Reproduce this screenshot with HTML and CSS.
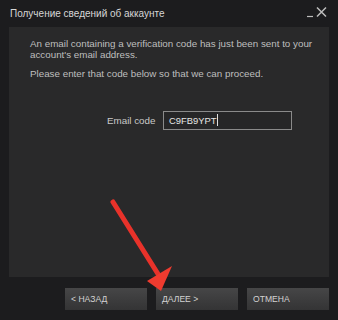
FILE: index.html
```html
<!DOCTYPE html>
<html lang="en">
<head>
    <meta charset="UTF-8">
    <title>Получение сведений об аккаунте</title>
    <link rel="stylesheet" href="styles.css">
</head>
<body>
    <div class="window">
        <div class="titlebar">
            <span class="title">Получение сведений об аккаунте</span>
            <span class="controls">
                <svg width="22" height="12" viewBox="0 0 22 12">
                    <path d="M0 10.5h6" stroke="#bdbdbd" stroke-width="1.2"/>
                    <path d="M10 1.5l9 9M19 1.5l-9 9" stroke="#bdbdbd" stroke-width="1.5"/>
                </svg>
            </span>
        </div>

        <div class="panel">
            <p>An email containing a verification code has just been sent to your account's email address.</p>
            <p>Please enter that code below so that we can proceed.</p>

            <div class="code-row">
                <label for="emailCode">Email code</label>
                <div class="code-input" id="emailCode">C9FB9YPT<span class="caret"></span></div>
            </div>
        </div>

        <div class="buttons">
            <button>&lt; НАЗАД</button>
            <button>ДАЛЕЕ &gt;</button>
            <button>ОТМЕНА</button>
        </div>

        <svg class="arrow" width="338" height="320" viewBox="0 0 338 320">
            <path d="M113 202 L158 274" stroke="#e8322a" stroke-width="5" stroke-linecap="round"/>
            <path d="M147 281 L172 266 L161 291 Z" fill="#ef3b2f"/>
        </svg>
    </div>
</body>
</html>
```

FILE: styles.css
```css
body {
    margin: 0;
    background-color: #1b1b1d;
    font-family: 'Liberation Sans', Arial, sans-serif;
}

.window {
    position: relative;
    width: 338px;
    height: 320px;
    background-color: #1c1c1e;
    overflow: hidden;
}

.titlebar {
    height: 27px;
    display: flex;
    align-items: center;
    justify-content: space-between;
    padding: 0 9px 0 10px;
}

.title {
    color: #d6d6d6;
    font-size: 10px;
    margin-top: -1px;
}

.controls {
    display: flex;
    margin-top: -3px;
}

.panel {
    margin: 0 9px;
    height: 250px;
    box-sizing: border-box;
    background-color: #29292a;
    padding: 12px 14px 0 21px;
}

.panel p {
    margin: 0 0 9px 0;
    color: #bfbfbf;
    font-size: 9.8px;
    line-height: 10.5px;
}

.code-row {
    display: flex;
    align-items: center;
    margin-top: 31px;
    padding-left: 77px;
}

.code-row label {
    color: #c9c9c9;
    font-size: 9.8px;
    width: 56px;
}

.code-input {
    width: 122px;
    height: 17px;
    border: 1px solid #8a8a8a;
    background-color: #262627;
    color: #e6e6e6;
    font-size: 9.4px;
    line-height: 17px;
    padding-left: 5px;
    display: flex;
    align-items: center;
}

.caret {
    display: inline-block;
    width: 1px;
    height: 12px;
    background-color: #e0e0e0;
    margin-left: 1px;
}

.buttons {
    display: flex;
    justify-content: flex-end;
    gap: 9px;
    margin: 11px 9px 0 0;
}

button {
    width: 82px;
    height: 22px;
    border: none;
    padding: 0 0 0 6px;
    text-align: left;
    font-family: 'Liberation Sans', Arial, sans-serif;
    font-size: 8.6px;
    color: #d2d2d2;
    background: linear-gradient(#464647, #343435);
}

.arrow {
    position: absolute;
    left: 0;
    top: 0;
}
```
